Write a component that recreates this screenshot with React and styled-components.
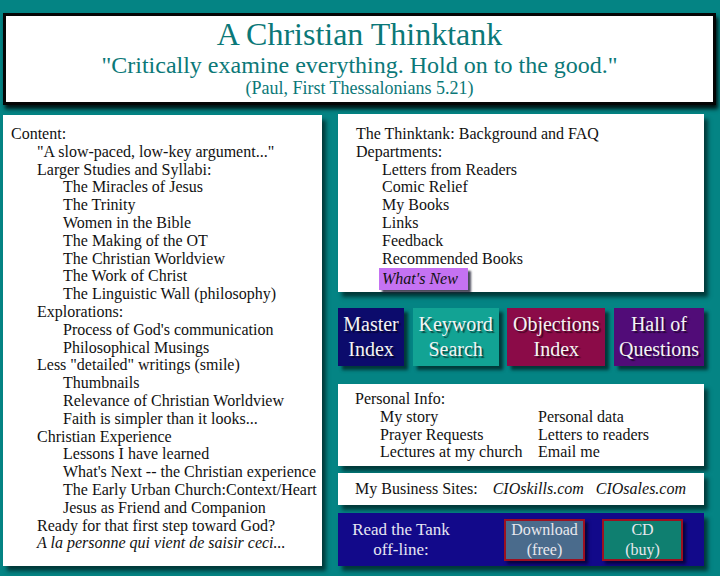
import styled, { createGlobalStyle } from "styled-components";

const GlobalStyle = createGlobalStyle`
  html, body {
    margin: 0;
    padding: 0;
    background: #048484;
  }
  body {
    font-family: "Liberation Serif", "Times New Roman", serif;
    color: #111;
  }
`;

const Page = styled.div`
  width: 720px;
  height: 576px;
  box-sizing: border-box;
  padding: 13px 4px 0 3px;
  overflow: hidden;
`;

const Header = styled.header`
  height: 92px;
  box-sizing: border-box;
  background: #fff;
  border: 3px solid #050505;
  box-shadow: 2px 4px 4px rgba(0, 0, 0, 0.85);
  text-align: center;
  color: #0b7878;
`;

const Title = styled.div`
  font-size: 32px;
  line-height: 36px;
`;

const Motto = styled.div`
  font-size: 24px;
  line-height: 26px;
`;

const Source = styled.div`
  font-size: 18px;
  line-height: 20px;
`;

const Main = styled.div`
  display: grid;
  grid-template-columns: 319px 366px;
  column-gap: 16px;
  margin-top: 9px;
  align-items: start;
`;

const Panel = styled.div`
  background: #fff;
  box-sizing: border-box;
  box-shadow: 4px 5px 4px rgba(0, 40, 40, 0.8);
  font-size: 16px;
  line-height: 17.8px;
`;

const ContentPanel = styled(Panel)`
  height: 451px;
  margin-top: 1px;
  padding: 10px 0 0 8px;
`;

const Line = styled.div`
  padding-left: ${(p) => p.$level * 26}px;
  font-style: ${(p) => (p.$italic ? "italic" : "normal")};
  white-space: nowrap;
`;

const Column = styled.div`
  display: flex;
  flex-direction: column;
`;

const DeptPanel = styled(Panel)`
  height: 178px;
  padding: 11px 0 0 18px;
`;

const Indent = styled.div`
  padding-left: 26px;
`;

const NewChip = styled.span`
  display: inline-block;
  margin: 1px 0 0 -3px;
  padding: 2px 10px 2px 3px;
  background: #c572f2;
  font-style: italic;
  line-height: 18px;
  box-shadow: 3px 3px 2px rgba(30, 30, 50, 0.8);
`;

const ButtonRow = styled.div`
  display: flex;
  justify-content: space-between;
  margin-top: 16px;
  height: 58px;
`;

const IndexButton = styled.div`
  width: ${(p) => p.$w}px;
  background: ${(p) => p.$bg};
  color: #f4f4f4;
  font-size: 20px;
  line-height: 25px;
  text-align: center;
  display: flex;
  flex-direction: column;
  justify-content: center;
  text-shadow: 2px 2px 1px rgba(0, 0, 0, 0.55);
  box-shadow: 4px 4px 3px rgba(0, 40, 40, 0.8);
`;

const InfoPanel = styled(Panel)`
  margin-top: 18px;
  height: 82px;
  padding: 6px 0 0 17px;
`;

const InfoGrid = styled.div`
  display: grid;
  grid-template-columns: 158px 1fr;
  padding-left: 25px;
`;

const SitesPanel = styled(Panel)`
  margin-top: 7px;
  height: 32px;
  padding: 0 0 0 17px;
  display: flex;
  align-items: center;
`;

const Site = styled.span`
  font-style: italic;
  margin-left: ${(p) => p.$ml}px;
`;

const OfflinePanel = styled.div`
  margin-top: 8px;
  height: 53px;
  box-sizing: border-box;
  background: #12098a;
  box-shadow: 4px 5px 4px rgba(0, 40, 40, 0.8);
  display: flex;
  align-items: center;
  padding-left: 10px;
  color: #e6e6f2;
  font-size: 17px;
  line-height: 20px;
`;

const OfflineLabel = styled.div`
  width: 106px;
  text-align: center;
`;

const OfflineButton = styled.div`
  width: 81px;
  height: 42px;
  box-sizing: border-box;
  margin-left: ${(p) => p.$ml}px;
  background: ${(p) => p.$bg};
  border: 2px solid #9c1020;
  display: flex;
  flex-direction: column;
  justify-content: center;
  text-align: center;
  font-size: 16px;
  line-height: 20px;
  color: #e8e8ee;
  box-shadow: 3px 3px 3px rgba(0, 0, 30, 0.7);
`;

const contents = [
  [0, "Content:"],
  [1, '"A slow-paced, low-key argument..."'],
  [1, "Larger Studies and Syllabi:"],
  [2, "The Miracles of Jesus"],
  [2, "The Trinity"],
  [2, "Women in the Bible"],
  [2, "The Making of the OT"],
  [2, "The Christian Worldview"],
  [2, "The Work of Christ"],
  [2, "The Linguistic Wall (philosophy)"],
  [1, "Explorations:"],
  [2, "Process of God's communication"],
  [2, "Philosophical Musings"],
  [1, 'Less "detailed" writings (smile)'],
  [2, "Thumbnails"],
  [2, "Relevance of Christian Worldview"],
  [2, "Faith is simpler than it looks..."],
  [1, "Christian Experience"],
  [2, "Lessons I have learned"],
  [2, "What's Next -- the Christian experience"],
  [2, "The Early Urban Church:Context/Heart"],
  [2, "Jesus as Friend and Companion"],
  [1, "Ready for that first step toward God?"],
  [1, "A la personne qui vient de saisir ceci...", true],
];

const departments = [
  "Letters from Readers",
  "Comic Relief",
  "My Books",
  "Links",
  "Feedback",
  "Recommended Books",
];

const indexes = [
  { top: "Master", bottom: "Index", bg: "#0c0b6c", w: 66 },
  { top: "Keyword", bottom: "Search", bg: "#12a394", w: 86 },
  { top: "Objections", bottom: "Index", bg: "#8b0b48", w: 98 },
  { top: "Hall of", bottom: "Questions", bg: "#510c78", w: 90 },
];

const personal = [
  "My story",
  "Personal data",
  "Prayer Requests",
  "Letters to readers",
  "Lectures at my church",
  "Email me",
];

function App() {
  return (
    <Page>
      <GlobalStyle />
      <Header>
        <Title>A Christian Thinktank</Title>
        <Motto>"Critically examine everything. Hold on to the good."</Motto>
        <Source>(Paul, First Thessalonians 5.21)</Source>
      </Header>
      <Main>
        <ContentPanel>
          {contents.map(([level, text, italic]) => (
            <Line key={text} $level={level} $italic={italic}>
              {text}
            </Line>
          ))}
        </ContentPanel>
        <Column>
          <DeptPanel>
            <div>The Thinktank: Background and FAQ</div>
            <div>Departments:</div>
            <Indent>
              {departments.map((d) => (
                <div key={d}>{d}</div>
              ))}
              <NewChip>What's New</NewChip>
            </Indent>
          </DeptPanel>
          <ButtonRow>
            {indexes.map((b) => (
              <IndexButton key={b.top} $bg={b.bg} $w={b.w}>
                <span>{b.top}</span>
                <span>{b.bottom}</span>
              </IndexButton>
            ))}
          </ButtonRow>
          <InfoPanel>
            <div>Personal Info:</div>
            <InfoGrid>
              {personal.map((p) => (
                <div key={p}>{p}</div>
              ))}
            </InfoGrid>
          </InfoPanel>
          <SitesPanel>
            <span>My Business Sites:</span>
            <Site $ml={15}>CIOskills.com</Site>
            <Site $ml={12}>CIOsales.com</Site>
          </SitesPanel>
          <OfflinePanel>
            <OfflineLabel>
              Read the Tank
              <br />
              off-line:
            </OfflineLabel>
            <OfflineButton $bg="#4a6b8c" $ml={50}>
              <span>Download</span>
              <span>(free)</span>
            </OfflineButton>
            <OfflineButton $bg="#0f7f70" $ml={17}>
              <span>CD</span>
              <span>(buy)</span>
            </OfflineButton>
          </OfflinePanel>
        </Column>
      </Main>
    </Page>
  );
}

export default App;
